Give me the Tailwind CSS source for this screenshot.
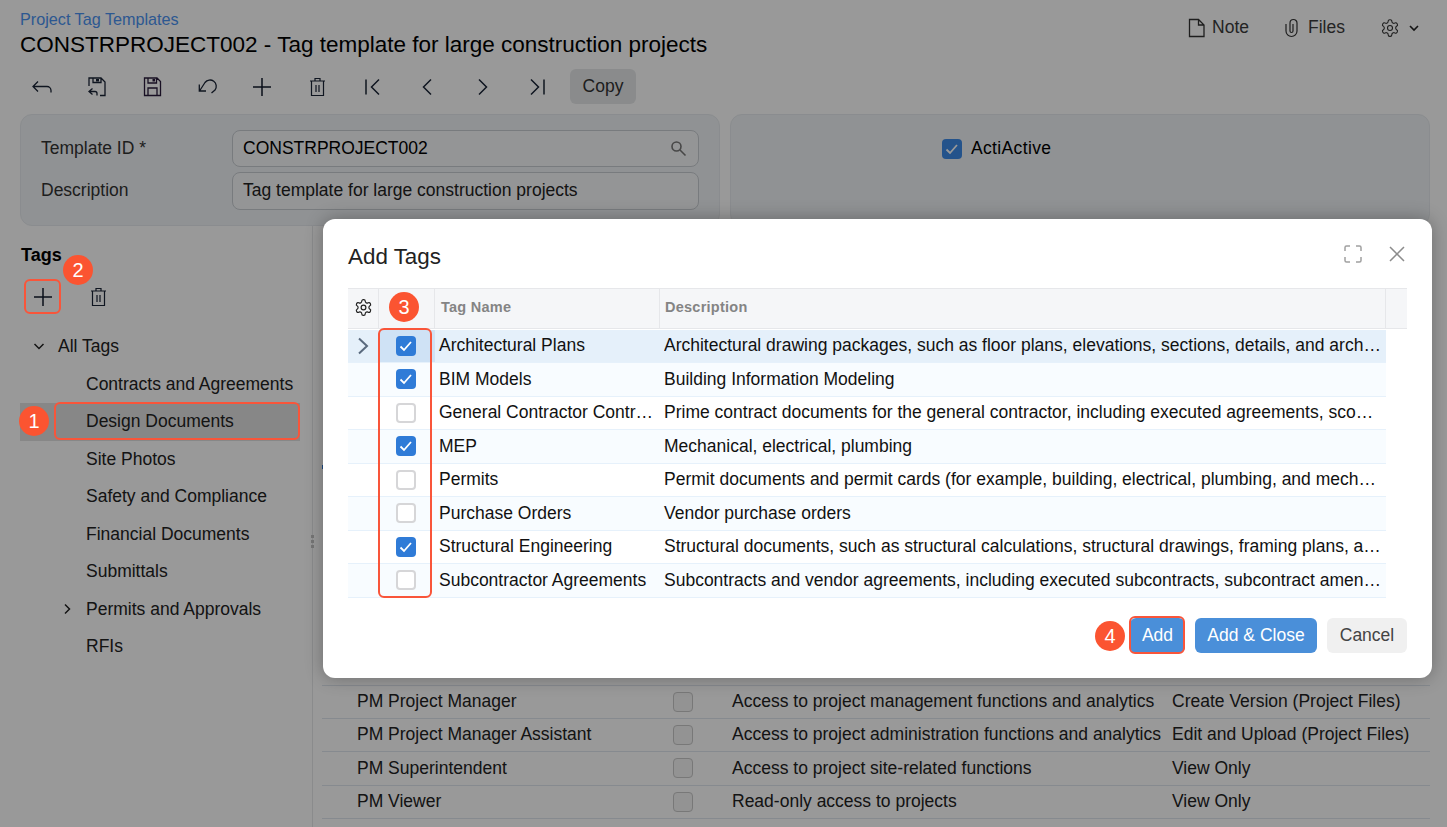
<!DOCTYPE html>
<html>
<head>
<meta charset="utf-8">
<script src="https://cdn.jsdelivr.net/npm/@tailwindcss/browser@4"></script>
</head>
<body>
<div class="relative w-[1447px] h-[827px] overflow-hidden bg-white font-['Liberation_Sans',Arial,sans-serif] text-black text-[17.5px] leading-none">

  <!-- Page header -->
  <header class="h-[69px] pl-5 pr-[27px] flex justify-between">
    <div class="pt-[10px]">
      <div class="text-[16.2px] h-[18px] leading-[18px] text-[#4c93f2]">Project Tag Templates</div>
      <div class="text-[22.5px] mt-[3px] leading-[28px]">CONSTRPROJECT002 - Tag template for large construction projects</div>
    </div>
    <div class="flex items-start pt-[18px] text-[#3c3c3c] text-[17.5px]">
      <div class="flex items-center gap-[6px] mr-[35px]">
        <svg class="w-[18px] h-[20px]" viewBox="0 0 18 20" fill="none" stroke="#333" stroke-width="1.3"><path d="M1.500 1.500h9l5.500 5.500v11.500H1.500zM10.500 1.500V7H16"/></svg>
        <span>Note</span>
      </div>
      <div class="flex items-center gap-[9px] mr-[35px]">
        <svg class="w-[15px] h-[20px]" viewBox="0 0 15 20" fill="none" stroke="#333" stroke-width="1.200"><path d="M2 6v7a5.500 5.500 0 0 0 11 0V5a3.500 3.500 0 0 0-7 0v8a1.500 1.500 0 0 0 3 0V6"/></svg>
        <span>Files</span>
      </div>
      <div class="flex items-center gap-[9px] pr-[1px]">
        <svg class="w-[20px] h-[20px]" viewBox="0 0 24 24" fill="none" stroke="#333" stroke-width="1.3"><path d="M12.22 2h-.44a2 2 0 0 0-2 2v.18a2 2 0 0 1-1 1.73l-.43.25a2 2 0 0 1-2 0l-.15-.08a2 2 0 0 0-2.73.73l-.22.38a2 2 0 0 0 .73 2.73l.15.1a2 2 0 0 1 1 1.72v.51a2 2 0 0 1-1 1.74l-.15.09a2 2 0 0 0-.73 2.73l.22.38a2 2 0 0 0 2.73.73l.15-.08a2 2 0 0 1 2 0l.43.25a2 2 0 0 1 1 1.73V20a2 2 0 0 0 2 2h.44a2 2 0 0 0 2-2v-.18a2 2 0 0 1 1-1.73l.43-.25a2 2 0 0 1 2 0l.15.08a2 2 0 0 0 2.73-.73l.22-.39a2 2 0 0 0-.73-2.73l-.15-.08a2 2 0 0 1-1-1.74v-.5a2 2 0 0 1 1-1.74l.15-.09a2 2 0 0 0 .73-2.73l-.22-.38a2 2 0 0 0-2.73-.73l-.15.08a2 2 0 0 1-2 0l-.43-.25a2 2 0 0 1-1-1.73V4a2 2 0 0 0-2-2z"/><circle cx="12" cy="12" r="3"/></svg>
        <svg class="w-[10px] h-[8px]" viewBox="0 0 10 8" fill="none" stroke="#222" stroke-width="1.6"><path d="M1 2l4 4 4-4"/></svg>
      </div>
    </div>
  </header>

  <!-- Toolbar -->
  <div class="h-[35px] pl-[14.5px] flex items-center">
    <div class="w-[55px] flex justify-center"><svg class="w-[22px] h-[22px]" viewBox="0 0 22 22" fill="none" stroke="#1a2436" stroke-width="1.3"><path d="M7 5.500l-5 5 5 5M2 10.500h14a4 4 0 0 1 4 4v2"/></svg></div>
    <div class="w-[55px] flex justify-center"><svg class="w-[22px] h-[22px]" viewBox="0 0 22 22" fill="none" stroke="#1a2436" stroke-width="1.3"><path d="M3 10V2h12l4 4v13.500h-5M7 2v4.500h8V2"/><path d="M6.500 12.500l-3.500 3 3.500 3M3 15.500h6a2 2 0 0 1 2 2v2"/><path d="M10 3h3v2.500h-3z" fill="#1a2436" stroke="none"/></svg></div>
    <div class="w-[55px] flex justify-center"><svg class="w-[22px] h-[22px]" viewBox="0 0 22 22" fill="none" stroke="#2a1c3c" stroke-width="1.3"><path d="M3.500 2h12.500l3.500 3.500v14H3.500zM7 2v5h8.500V2M7 19.500V12h9v7.500"/><path d="M11.500 3h2.500v2.500h-2.500z" fill="#2a1c3c" stroke="none"/></svg></div>
    <div class="w-[55px] flex justify-center"><svg class="w-[22px] h-[22px]" viewBox="0 0 22 22" fill="none" stroke="#1a2436" stroke-width="1.3"><path d="M3.300 8.500V15H10M3.500 15L9 6.500A6 6 0 0 1 19 14l-3.500 3"/></svg></div>
    <div class="w-[55px] flex justify-center"><svg class="w-[22px] h-[22px]" viewBox="0 0 22 22" fill="none" stroke="#111a2c" stroke-width="1.5"><path d="M11 2v18M2 11h18"/></svg></div>
    <div class="w-[55px] flex justify-center"><svg class="w-[22px] h-[22px]" viewBox="0 0 22 22" fill="none" stroke="#1a2436" stroke-width="1.200"><path d="M4 5h15M9 5V2.500h5V5M5.500 5v14.500h12V5M10 9v7M13 9v7"/></svg></div>
    <div class="w-[55px] flex justify-center"><svg class="w-[22px] h-[22px]" viewBox="0 0 22 22" fill="none" stroke="#1a2436" stroke-width="1.5"><path d="M5 3.500v15M18 3.500L10.500 11l7.500 7.500"/></svg></div>
    <div class="w-[55px] flex justify-center"><svg class="w-[22px] h-[22px]" viewBox="0 0 22 22" fill="none" stroke="#1a2436" stroke-width="1.5"><path d="M15 3.500L7.500 11l7.500 7.500"/></svg></div>
    <div class="w-[55px] flex justify-center"><svg class="w-[22px] h-[22px]" viewBox="0 0 22 22" fill="none" stroke="#1a2436" stroke-width="1.5"><path d="M8 3.500l7.500 7.500L8 18.500"/></svg></div>
    <div class="w-[55px] flex justify-center"><svg class="w-[22px] h-[22px]" viewBox="0 0 22 22" fill="none" stroke="#1a2436" stroke-width="1.5"><path d="M18 3.500v15M5 3.500L12.500 11 5 18.500"/></svg></div>
    <div class="ml-[5.500px] w-[66px] h-[35px] rounded-md bg-[#e6e8ea] flex items-center justify-center text-[#333]">Copy</div>
  </div>

  <!-- Form panels -->
  <div class="mt-[10px] px-5 flex gap-[10px] h-[112px] pr-[17px]">
    <div class="w-[700px] rounded-xl bg-[#f1f4f7] border border-[#e6eaee] pl-5 pr-5 pt-[15px] grid grid-cols-[191px_1fr] auto-rows-[37px] gap-y-[5px] items-center">
      <div class="text-[#333]">Template ID *</div>
      <div class="h-[37px] rounded-lg border border-[#c9ced3] bg-[#f7f8fa] px-[10px] flex items-center justify-between">
        <span>CONSTRPROJECT002</span>
        <svg class="w-[17px] h-[17px] mr-[1px]" viewBox="0 0 17 17" fill="none" stroke="#777" stroke-width="1.6"><circle cx="6.500" cy="6.500" r="4.500"/><path d="M10 10l5.500 5.500"/></svg>
      </div>
      <div class="text-[#333]">Description</div>
      <div class="h-[38px] rounded-lg border border-[#c9ced3] bg-[#f7f8fa] px-[10px] flex items-center text-[#222]">Tag template for large construction projects</div>
    </div>
    <div class="flex-1 rounded-xl bg-[#f1f4f7] border border-[#e6eaee] pl-[211px] pt-[24px]">
      <div class="flex items-center gap-[9px]">
        <span class="w-5 h-5 rounded-[4px] bg-[#3c8ae8] flex items-center justify-center"><svg class="w-4 h-4" viewBox="0 0 16 16" fill="none" stroke="#fff" stroke-width="1.800"><path d="M2.500 8.500l3.500 3.500 7-8"/></svg></span>
        <span class="tracking-[0.35px]">ActiActive</span>
      </div>
    </div>
  </div>

  <!-- Lower area -->
  <div class="flex h-[601px]">
    <aside class="w-[313px] h-full border-r border-[#e6e8ea] relative pt-[19px]">
      <div class="pl-[21px] font-bold text-[18px] leading-5">Tags</div>
      <div class="mt-[14px] h-[35px] pl-[25px] flex items-center">
        <div class="w-9 flex justify-center"><svg class="w-[22px] h-[22px]" viewBox="0 0 22 22" fill="none" stroke="#111a2c" stroke-width="1.5"><path d="M11 2v18M2 11h18"/></svg></div>
        <div class="ml-[26px] w-[22px] flex justify-center"><svg class="w-[22px] h-[22px]" viewBox="0 0 22 22" fill="none" stroke="#1a2436" stroke-width="1.200"><path d="M4 5h15M9 5V2.500h5V5M5.500 5v14.500h12V5M10 9v7M13 9v7"/></svg></div>
      </div>
      <ul class="mt-[14px] text-[#222]">
        <li class="h-[37.500px] pl-[33px] flex items-center gap-[13px]"><svg class="w-[12px] h-[9px]" viewBox="0 0 12 9" fill="none" stroke="#222" stroke-width="1.500"><path d="M1.500 2l4.500 4.500L10.500 2"/></svg><span>All Tags</span></li>
        <li class="h-[37.500px] pl-[86px] flex items-center">Contracts and Agreements</li>
        <li class="ml-5 w-[280px] h-[37.500px] pl-[66px] flex items-center bg-[#e2e2e2]">Design Documents</li>
        <li class="h-[37.500px] pl-[86px] flex items-center">Site Photos</li>
        <li class="h-[37.500px] pl-[86px] flex items-center">Safety and Compliance</li>
        <li class="h-[37.500px] pl-[86px] flex items-center">Financial Documents</li>
        <li class="h-[37.500px] pl-[86px] flex items-center">Submittals</li>
        <li class="h-[37.500px] pl-[63px] flex items-center gap-[14px]"><svg class="w-[9px] h-[12px]" viewBox="0 0 9 12" fill="none" stroke="#222" stroke-width="1.500"><path d="M2 1.500L6.500 6 2 10.500"/></svg><span>Permits and Approvals</span></li>
        <li class="h-[37.500px] pl-[86px] flex items-center">RFIs</li>
      </ul>
      <div class="absolute right-[-2px] top-[309px] flex flex-col gap-[2px]">
        <i class="block w-[3px] h-[3px] bg-[#c4c4c4]"></i>
        <i class="block w-[3px] h-[3px] bg-[#c4c4c4]"></i>
        <i class="block w-[3px] h-[3px] bg-[#c4c4c4]"></i>
      </div>
      <i class="absolute left-[322px] top-[239px] block w-1 h-1 bg-[#2f7bd7]"></i>
    </aside>
    <main class="flex-1 pl-[9px] pr-[17px] flex flex-col justify-end pb-[8px] text-[#222]">
      <div class="h-[33.500px] border-y border-[#dfe7ee] grid grid-cols-[351px_59px_440px_1fr] items-center">
        <span class="pl-[35px]">PM Project Manager</span><span class="w-5 h-5 rounded-[4px] border border-[#c8c8c8] bg-[#f5f5f5]"></span><span class="whitespace-nowrap">Access to project management functions and analytics</span><span class="whitespace-nowrap">Create Version (Project Files)</span>
      </div>
      <div class="h-[33.500px] border-b border-[#dfe7ee] grid grid-cols-[351px_59px_440px_1fr] items-center">
        <span class="pl-[35px]">PM Project Manager Assistant</span><span class="w-5 h-5 rounded-[4px] border border-[#c8c8c8] bg-[#f5f5f5]"></span><span class="whitespace-nowrap">Access to project administration functions and analytics</span><span class="whitespace-nowrap">Edit and Upload (Project Files)</span>
      </div>
      <div class="h-[33.500px] border-b border-[#dfe7ee] grid grid-cols-[351px_59px_440px_1fr] items-center">
        <span class="pl-[35px]">PM Superintendent</span><span class="w-5 h-5 rounded-[4px] border border-[#c8c8c8] bg-[#f5f5f5]"></span><span class="whitespace-nowrap">Access to project site-related functions</span><span class="whitespace-nowrap">View Only</span>
      </div>
      <div class="h-[33.500px] border-b border-[#dfe7ee] grid grid-cols-[351px_59px_440px_1fr] items-center">
        <span class="pl-[35px]">PM Viewer</span><span class="w-5 h-5 rounded-[4px] border border-[#c8c8c8] bg-[#f5f5f5]"></span><span class="whitespace-nowrap">Read-only access to projects</span><span class="whitespace-nowrap">View Only</span>
      </div>
    </main>
  </div>

  <!-- Overlay -->
  <div class="absolute inset-0 bg-black/40"></div>

  <!-- Modal -->
  <section class="absolute left-[323px] top-[219px] w-[1109px] h-[459px] bg-white rounded-xl shadow-[0_0_18px_rgba(0,0,0,0.3)] px-[25px] flex flex-col">
    <div class="h-[69px] flex items-center justify-between pt-[7px]">
      <h2 class="text-[22.4px] text-[#222]">Add Tags</h2>
      <div class="flex items-center gap-[27px] pr-[2px] mb-[6px]">
        <svg class="w-[18px] h-[18px]" viewBox="0 0 18 18" fill="none" stroke="#a0a0a0" stroke-width="1.500"><path d="M1 6V2.500A1.500 1.500 0 0 1 2.500 1H6M12 1h3.500A1.500 1.500 0 0 1 17 2.500V6M17 12v3.500a1.500 1.500 0 0 1-1.500 1.500H12M6 17H2.500A1.500 1.500 0 0 1 1 15.500V12"/></svg>
        <svg class="w-4 h-4" viewBox="0 0 16 16" fill="none" stroke="#8c8c8c" stroke-width="1.500"><path d="M1 1l14 14M15 1L1 15"/></svg>
      </div>
    </div>
    <div class="text-[17.500px] text-[#111]">
      <!-- header -->
      <div class="h-[41px] bg-[#f5f6f8] border-y border-[#e6e7ea] grid grid-cols-[31px_56px_225px_726px_1fr] items-stretch font-bold text-[14.500px] tracking-[0.25px] text-[#848484]">
        <div class="flex items-center justify-center border-r border-[#e6e7ea] pb-[2px]"><svg class="w-[19px] h-[19px]" viewBox="0 0 24 24" fill="none" stroke="#222" stroke-width="1.500"><path d="M12.22 2h-.44a2 2 0 0 0-2 2v.18a2 2 0 0 1-1 1.73l-.43.25a2 2 0 0 1-2 0l-.15-.08a2 2 0 0 0-2.73.73l-.22.38a2 2 0 0 0 .73 2.73l.15.1a2 2 0 0 1 1 1.72v.51a2 2 0 0 1-1 1.74l-.15.09a2 2 0 0 0-.73 2.73l.22.38a2 2 0 0 0 2.73.73l.15-.08a2 2 0 0 1 2 0l.43.25a2 2 0 0 1 1 1.73V20a2 2 0 0 0 2 2h.44a2 2 0 0 0 2-2v-.18a2 2 0 0 1 1-1.73l.43-.25a2 2 0 0 1 2 0l.15.08a2 2 0 0 0 2.73-.73l.22-.39a2 2 0 0 0-.73-2.73l-.15-.08a2 2 0 0 1-1-1.74v-.5a2 2 0 0 1 1-1.74l.15-.09a2 2 0 0 0 .73-2.73l-.22-.38a2 2 0 0 0-2.73-.73l-.15.08a2 2 0 0 1-2 0l-.43-.25a2 2 0 0 1-1-1.73V4a2 2 0 0 0-2-2z"/><circle cx="12" cy="12" r="3"/></svg></div>
        <div class="border-r border-[#e6e7ea]"></div>
        <div class="flex items-center pl-[6px] border-r border-[#e6e7ea] pb-[3px]">Tag Name</div>
        <div class="flex items-center pl-[5px] border-r border-[#e6e7ea] pb-[3px]">Description</div>
        <div></div>
      </div>
      <!-- rows -->
      <div class="mt-[0.5px] w-[1038px] grid grid-cols-[31px_56px_225px_726px] auto-rows-[33.500px] items-stretch [&>div]:border-b [&>div]:border-[#e6f1fb] [&>div]:flex [&>div]:items-center">
        <div class="bg-[#e5f0fa] justify-center pr-[2px]"><svg class="w-[14px] h-[20px]" viewBox="0 0 14 20" fill="none" stroke="#5a6a7e" stroke-width="2"><path d="M3 2.500L11 10 3 17.500"/></svg></div>
        <div class="bg-[#cfe2f5] justify-center pr-[2px]"><span class="w-5 h-5 rounded-[4px] bg-[#2f7bd7] flex items-center justify-center"><svg class="w-4 h-4" viewBox="0 0 16 16" fill="none" stroke="#fff" stroke-width="1.800"><path d="M2.500 8.500l3.500 3.500 7-8"/></svg></span></div>
        <div class="bg-[#e5f0fa] pl-1 whitespace-nowrap">Architectural Plans</div>
        <div class="bg-[#e5f0fa] pl-1 pr-[4px] overflow-hidden"><span class="block w-full whitespace-nowrap overflow-hidden text-ellipsis leading-[21px]">Architectural drawing packages, such as floor plans, elevations, sections, details, and architectural specifications.</span></div>

        <div class="bg-[#f8fcff]"></div>
        <div class="bg-[#f8fcff] justify-center pr-[2px]"><span class="w-5 h-5 rounded-[4px] bg-[#2f7bd7] flex items-center justify-center"><svg class="w-4 h-4" viewBox="0 0 16 16" fill="none" stroke="#fff" stroke-width="1.800"><path d="M2.500 8.500l3.500 3.500 7-8"/></svg></span></div>
        <div class="bg-[#f8fcff] pl-1 whitespace-nowrap">BIM Models</div>
        <div class="bg-[#f8fcff] pl-1 pr-[4px]">Building Information Modeling</div>

        <div></div>
        <div class="justify-center pr-[2px]"><span class="w-5 h-5 rounded-[4px] border-2 border-[#d6d6d8] bg-white"></span></div>
        <div class="pl-1 pr-1 overflow-hidden"><span class="block w-full whitespace-nowrap overflow-hidden text-ellipsis leading-[21px]">General Contractor Contracts</span></div>
        <div class="pl-1 pr-[4px] overflow-hidden"><span class="block w-full whitespace-nowrap overflow-hidden text-ellipsis leading-[21px]">Prime contract documents for the general contractor, including executed agreements, scopes of work, and change orders.</span></div>

        <div class="bg-[#f8fcff]"></div>
        <div class="bg-[#f8fcff] justify-center pr-[2px]"><span class="w-5 h-5 rounded-[4px] bg-[#2f7bd7] flex items-center justify-center"><svg class="w-4 h-4" viewBox="0 0 16 16" fill="none" stroke="#fff" stroke-width="1.800"><path d="M2.500 8.500l3.500 3.500 7-8"/></svg></span></div>
        <div class="bg-[#f8fcff] pl-1 whitespace-nowrap">MEP</div>
        <div class="bg-[#f8fcff] pl-1 pr-[4px]">Mechanical, electrical, plumbing</div>

        <div></div>
        <div class="justify-center pr-[2px]"><span class="w-5 h-5 rounded-[4px] border-2 border-[#d6d6d8] bg-white"></span></div>
        <div class="pl-1 whitespace-nowrap">Permits</div>
        <div class="pl-1 pr-[4px] overflow-hidden"><span class="block w-full whitespace-nowrap overflow-hidden text-ellipsis leading-[21px]">Permit documents and permit cards (for example, building, electrical, plumbing, and mechanical permits and inspections).</span></div>

        <div class="bg-[#f8fcff]"></div>
        <div class="bg-[#f8fcff] justify-center pr-[2px]"><span class="w-5 h-5 rounded-[4px] border-2 border-[#d6d6d8] bg-white"></span></div>
        <div class="bg-[#f8fcff] pl-1 whitespace-nowrap">Purchase Orders</div>
        <div class="bg-[#f8fcff] pl-1 pr-[4px]">Vendor purchase orders</div>

        <div></div>
        <div class="justify-center pr-[2px]"><span class="w-5 h-5 rounded-[4px] bg-[#2f7bd7] flex items-center justify-center"><svg class="w-4 h-4" viewBox="0 0 16 16" fill="none" stroke="#fff" stroke-width="1.800"><path d="M2.500 8.500l3.500 3.500 7-8"/></svg></span></div>
        <div class="pl-1 whitespace-nowrap">Structural Engineering</div>
        <div class="pl-1 pr-[4px] overflow-hidden"><span class="block w-full whitespace-nowrap overflow-hidden text-ellipsis leading-[21px]">Structural documents, such as structural calculations, structural drawings, framing plans, and engineering reports.</span></div>

        <div class="bg-[#f8fcff]"></div>
        <div class="bg-[#f8fcff] justify-center pr-[2px]"><span class="w-5 h-5 rounded-[4px] border-2 border-[#d6d6d8] bg-white"></span></div>
        <div class="bg-[#f8fcff] pl-1 whitespace-nowrap">Subcontractor Agreements</div>
        <div class="bg-[#f8fcff] pl-1 pr-[4px] overflow-hidden"><span class="block w-full whitespace-nowrap overflow-hidden text-ellipsis leading-[21px]">Subcontracts and vendor agreements, including executed subcontracts, subcontract amendments, and purchase orders.</span></div>
      </div>
    </div>
    <div class="mt-[20.500px] flex justify-end gap-[10px] h-[35px]">
      <button class="w-[55px] rounded-md bg-[#4a8fd9] text-white">Add</button>
      <button class="w-[122px] rounded-md bg-[#4a8fd9] text-white">Add &amp; Close</button>
      <button class="w-[80px] rounded-md bg-[#f0f0f0] text-[#444]">Cancel</button>
    </div>
  </section>

  <!-- Annotations -->
  <div class="absolute left-[54px] top-[402px] w-[246px] h-[38px] rounded-md border-2 border-[#f9553a]"></div>
  <div class="absolute left-[24px] top-[279px] w-[37px] h-[35px] rounded-md border-2 border-[#f9553a]"></div>
  <div class="absolute left-[378px] top-[328px] w-[54px] h-[270px] rounded-md border-2 border-[#f9553a]"></div>
  <div class="absolute left-[1129px] top-[616px] w-[56px] h-[38px] rounded-md border-2 border-[#f9553a]"></div>
  <div class="absolute left-[19px] top-[406px] w-[30px] h-[30px] rounded-full bg-[#fb5431] text-white text-[20px] flex items-center justify-center">1</div>
  <div class="absolute left-[63px] top-[255px] w-[30px] h-[30px] rounded-full bg-[#fb5431] text-white text-[20px] flex items-center justify-center">2</div>
  <div class="absolute left-[389px] top-[292px] w-[30px] h-[30px] rounded-full bg-[#fb5431] text-white text-[20px] flex items-center justify-center">3</div>
  <div class="absolute left-[1095px] top-[621px] w-[30px] h-[30px] rounded-full bg-[#fb5431] text-white text-[20px] flex items-center justify-center">4</div>
</div>
</body>
</html>
